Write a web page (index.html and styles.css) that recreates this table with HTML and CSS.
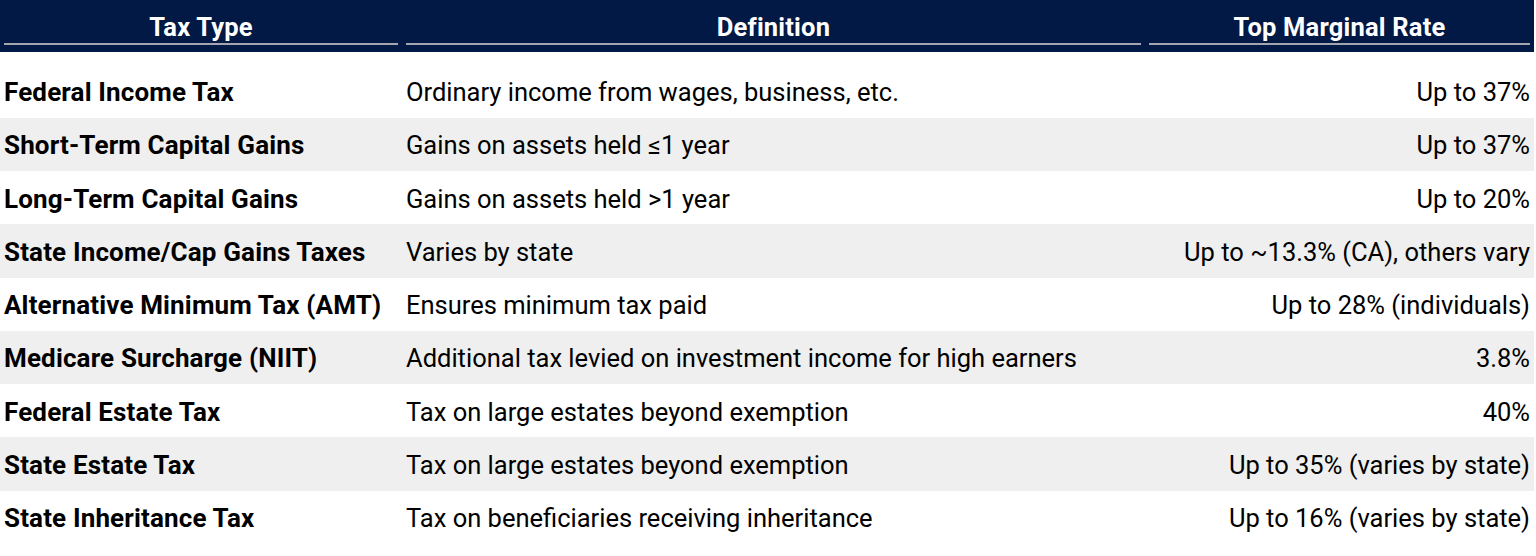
FILE: index.html
```html
<!DOCTYPE html>
<html lang="en">
<head>
<meta charset="utf-8">
<title>Tax Types</title>
<link rel="stylesheet" href="styles.css">
</head>
<body>
<div class="table">
  <div class="head">
    <div class="hcell">Tax Type</div>
    <div class="hcell">Definition</div>
    <div class="hcell">Top Marginal Rate</div>
  </div>
  <div class="body">
    <div class="row"><div class="c1">Federal Income Tax</div><div class="c2">Ordinary income from wages, business, etc.</div><div class="c3">Up to 37%</div></div>
    <div class="row alt"><div class="c1">Short-Term Capital Gains</div><div class="c2">Gains on assets held ≤1 year</div><div class="c3">Up to 37%</div></div>
    <div class="row"><div class="c1">Long-Term Capital Gains</div><div class="c2">Gains on assets held &gt;1 year</div><div class="c3">Up to 20%</div></div>
    <div class="row alt"><div class="c1">State Income/Cap Gains Taxes</div><div class="c2">Varies by state</div><div class="c3">Up to ~13.3% (CA), others vary</div></div>
    <div class="row"><div class="c1">Alternative Minimum Tax (AMT)</div><div class="c2">Ensures minimum tax paid</div><div class="c3">Up to 28% (individuals)</div></div>
    <div class="row alt"><div class="c1">Medicare Surcharge (NIIT)</div><div class="c2">Additional tax levied on investment income for high earners</div><div class="c3">3.8%</div></div>
    <div class="row"><div class="c1">Federal Estate Tax</div><div class="c2">Tax on large estates beyond exemption</div><div class="c3">40%</div></div>
    <div class="row alt"><div class="c1">State Estate Tax</div><div class="c2">Tax on large estates beyond exemption</div><div class="c3">Up to 35% (varies by state)</div></div>
    <div class="row"><div class="c1">State Inheritance Tax</div><div class="c2">Tax on beneficiaries receiving inheritance</div><div class="c3">Up to 16% (varies by state)</div></div>
  </div>
</div>
</body>
</html>
```
FILE: styles.css
```css
html, body {
  margin: 0;
  padding: 0;
  background: #ffffff;
}
body {
  font-family: Roboto, "Liberation Sans", sans-serif;
  color: #000000;
}
.table {
  width: 1534px;
}
.head {
  background: #021845;
  height: 52px;
  display: grid;
  grid-template-columns: 394px 735px 381px;
  column-gap: 8px;
  padding: 0 4px;
  box-sizing: border-box;
  align-items: start;
}
.hcell {
  height: 45px;
  border-bottom: 2px solid #a3a6ae;
  color: #ffffff;
  font-weight: 700;
  font-size: 25.5px;
  letter-spacing: 0.2px;
  line-height: 30px;
  text-align: center;
  padding-top: 12px;
  box-sizing: border-box;
}
.body {
  padding-top: 12.5px;
}
.row {
  height: 53.25px;
  display: grid;
  grid-template-columns: 394px 735px 381px;
  column-gap: 8px;
  padding: 0 4px;
  align-items: center;
  font-size: 25.5px;
  padding-top: 2px;
  box-sizing: border-box;
}
.row.alt {
  background: #efefef;
}
.c1 {
  font-weight: 700;
  font-size: 26px;
  letter-spacing: 0.15px;
  white-space: nowrap;
}
.c2 {
  white-space: nowrap;
}
.c3 {
  text-align: right;
  white-space: nowrap;
}
```
